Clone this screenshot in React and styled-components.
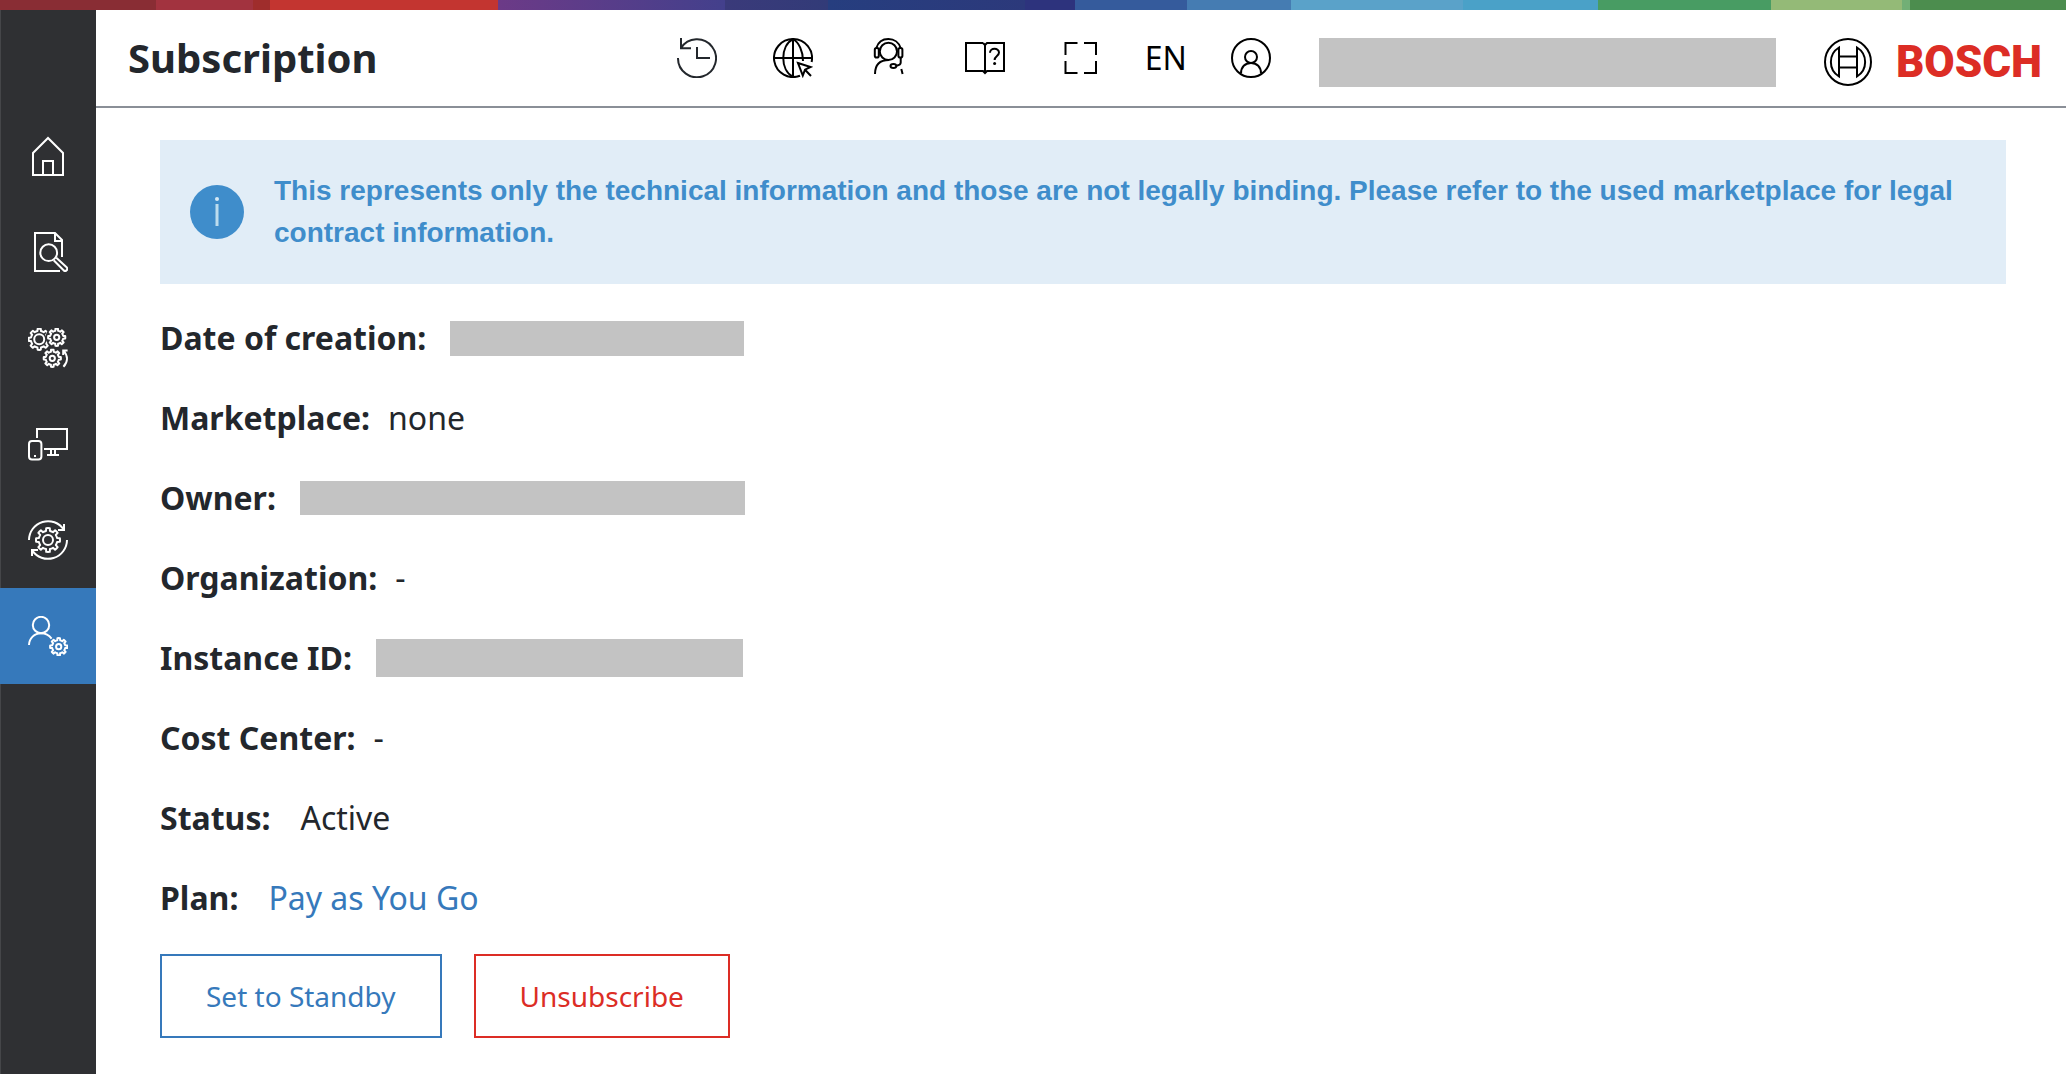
import React from "react";
import styled, { createGlobalStyle } from "styled-components";

const color = {
  ink: "#23272c",
  sidebar: "#2f3033",
  blue: "#3679bb",
  red: "#dc2d25",
  line: "#8a8f97",
  info: "#3f8dcb",
  infoBg: "#e1edf7",
  redacted: "#c3c3c3",
};

const GlobalStyle = createGlobalStyle`
  * { box-sizing: border-box; }
  body {
    margin: 0;
    background: #fff;
    color: ${color.ink};
    font-family: "Noto Sans", sans-serif;
    font-size: 32px;
    line-height: 48px;
  }
`;

const Page = styled.div`
  min-height: 100vh;
  display: flex;
  flex-direction: column;
`;

const Supergraphic = styled.div`
  height: 10px;
  display: flex;
`;

const Segment = styled.span`
  flex: ${(p) => p.$span} 1 0;
  background: ${(p) => p.$fill};
`;

const Body = styled.div`
  flex: 1;
  display: flex;
`;

const Sidebar = styled.nav`
  flex: none;
  width: 96px;
  padding-top: 98px;
  background: ${color.sidebar};
  box-shadow: inset 1px 0 #454649;
`;

const SideLink = styled.a`
  height: 96px;
  display: flex;
  align-items: center;
  justify-content: center;
  color: #fff;
  background: ${(p) => (p.$active ? color.blue : "transparent")};
`;

const Content = styled.div`
  flex: 1;
  min-width: 0;
`;

const Header = styled.header`
  height: 98px;
  padding: 0 24px 0 32px;
  display: flex;
  align-items: center;
  border-bottom: 2px solid ${color.line};
`;

const Title = styled.h1`
  margin: 0 auto 0 0;
  font-size: 40px;
  line-height: 48px;
  font-weight: 700;
`;

const Tools = styled.div`
  display: flex;
  align-items: center;
  gap: 56px;
  margin-right: 48px;
`;

const ToolButton = styled.button`
  padding: 0;
  border: 0;
  background: none;
  color: ${(p) => (p.$soft ? color.ink : "#000")};
  font: inherit;
  display: flex;
  align-items: center;
  cursor: pointer;
`;

const LanguageGroup = styled.div`
  display: flex;
  align-items: center;
  gap: 44px;
  margin-left: -12px;
`;

const HeaderEnd = styled.div`
  display: flex;
  align-items: center;
  gap: 48px;
  padding-top: 8px;
`;

const Redacted = styled.span`
  flex: none;
  width: ${(p) => p.$width}px;
  height: ${(p) => p.$height}px;
  background: ${color.redacted};
`;

const Brand = styled.a`
  display: flex;
  align-items: center;
  gap: 24px;
  color: ${color.red};
  text-decoration: none;
  font-family: Roboto, sans-serif;
  font-size: 44px;
  line-height: 48px;
  font-weight: 900;
`;

const Main = styled.main`
  padding: 32px 60px 36px 64px;
`;

const Notice = styled.section`
  display: flex;
  align-items: center;
  gap: 30px;
  padding: 30px;
  background: ${color.infoBg};
  color: ${color.info};
`;

const NoticeText = styled.p`
  margin: 0;
  font-family: "Liberation Sans", Arial, sans-serif;
  font-size: 28px;
  line-height: 42px;
  font-weight: 700;
`;

const Details = styled.dl`
  margin: 30px 0 32px;
  display: flex;
  flex-direction: column;
  gap: 32px;
`;

const gaps = { narrow: 18, medium: 24, wide: 30 };

const Row = styled.div`
  display: flex;
  align-items: center;
  gap: ${(p) => gaps[p.$gap]}px;
`;

const Term = styled.dt`
  font-weight: 700;
`;

const Value = styled.dd`
  margin: 0;
  display: flex;
`;

const PlanLink = styled.a`
  color: ${color.blue};
  text-decoration: none;
`;

const Actions = styled.div`
  display: flex;
  gap: 32px;
`;

const ActionButton = styled.button`
  height: 84px;
  padding: 0 44px;
  border: 2px solid currentColor;
  background: #fff;
  color: ${(p) => (p.$danger ? color.red : color.blue)};
  font-family: inherit;
  font-size: 28px;
  line-height: 42px;
  cursor: pointer;
`;

const Glyph = styled.svg`
  display: block;
  flex: none;
  fill: none;
  stroke: currentColor;
  stroke-width: 2;
`;

function Icon({ size = 40, children, ...rest }) {
  return (
    <Glyph width={size} height={size} viewBox={`0 0 ${size} ${size}`} aria-hidden="true" {...rest}>
      {children}
    </Glyph>
  );
}

/* Closed outline of a cog wheel with evenly spaced teeth. */
function gearPath(cx, cy, outer, inner, teeth = 8) {
  const step = (Math.PI * 2) / teeth;
  const at = (r, a) => `${(cx + r * Math.sin(a)).toFixed(2)} ${(cy - r * Math.cos(a)).toFixed(2)}`;
  let d = "";
  for (let i = 0; i < teeth; i++) {
    const a = i * step;
    d += `${i ? "L" : "M"}${at(inner, a - step * 0.27)}L${at(outer, a - step * 0.19)}`;
    d += `A${outer} ${outer} 0 0 1 ${at(outer, a + step * 0.19)}L${at(inner, a + step * 0.27)}`;
    d += `A${inner} ${inner} 0 0 1 ${at(inner, a + step * 0.73)}`;
  }
  return d + "Z";
}

const HomeIcon = () => (
  <Icon>
    <path d="M5 17 20 2 35 17V39H5ZM15 39V25H25V39" />
  </Icon>
);

const DocumentSearchIcon = () => (
  <Icon>
    <path d="M32 39H7V1H27L34 8V25M27 1V9H34" />
    <circle cx="20.7" cy="20.7" r="8.4" />
    <path d="M25.7 28.3 35.6 38.3A2 2 0 0 0 38.6 35.3L28.3 25.7" />
  </Icon>
);

const GearsIcon = () => (
  <Icon strokeLinejoin="round">
    <path d={gearPath(11.2, 11.3, 10.6, 8.4)} />
    <circle cx="11.2" cy="11.3" r="5" />
    <circle cx="28.7" cy="9.3" r="11" fill={color.sidebar} stroke="none" />
    <path d={gearPath(28.7, 9.3, 8.6, 6.6)} />
    <circle cx="28.7" cy="9.3" r="2.6" />
    <path d={gearPath(24.3, 30.3, 8.6, 6.6)} />
    <circle cx="24.3" cy="30.3" r="2.6" />
    <path d="M35.4 38.8C40 34 40.2 28 35.6 22.6M35.2 27V22.4H39.6" strokeLinejoin="miter" />
  </Icon>
);

const DevicesIcon = () => (
  <Icon>
    <path d="M9 14V5H39V25H16M23 25V31M27 25V31M19 31H31" />
    <rect x="1" y="17" width="12.4" height="18.4" rx="3" />
    <path d="M6 32H8" />
  </Icon>
);

const SyncIcon = () => (
  <Icon>
    <path d="M1 20A19 19 0 0 1 35.8 9.6M36 4V10H30M39 20A19 19 0 0 1 4.2 30.4M4 36V30H10" />
    <path d={gearPath(20, 20, 12, 9.3)} strokeLinejoin="round" />
    <circle cx="20" cy="20" r="5" />
  </Icon>
);

const UserSettingsIcon = () => (
  <Icon>
    <circle cx="13" cy="9" r="8.2" />
    <path d="M1 29A12 12 0 0 1 13 17.2C17.5 17.2 21 19 23.6 22.6" />
    <path d={gearPath(30.7, 30.7, 8.6, 6.6)} strokeLinejoin="round" />
    <circle cx="30.7" cy="30.7" r="2.6" />
  </Icon>
);

const HistoryIcon = () => (
  <Icon>
    <path d="M1 20A19 19 0 1 0 4 10M4 0V10.3H14M20 9V20H33" />
  </Icon>
);

const GlobeIcon = () => (
  <Icon>
    <path d="M27 37.7A19 19 0 1 1 38.6 24M20 1V39M1 20H39" />
    <path d="M20 1C7 8 7 32 20 39M20 1C26 4.5 30 13 30 23" />
    <path d="M25 25 37.5 29 32 31.7 29.8 37.5ZM32 31.7 38 38" />
  </Icon>
);

const SupportIcon = () => (
  <Icon>
    <circle cx="19.4" cy="13.4" r="8.6" />
    <path d="M7.3 10C9 4.5 13.5 1 19.4 1S30 4.5 31.6 10" />
    <rect x="5.8" y="10" width="4" height="9.6" rx="1.8" />
    <rect x="29.4" y="10" width="4" height="9.6" rx="1.8" />
    <path d="M31.7 20V24.5C31.7 26.5 30 27.3 27.6 27.7" />
    <ellipse cx="24.4" cy="28" rx="2.9" ry="2" />
    <path d="M6 36C6 27 11 22 20 22M32.3 31 33.6 36" />
  </Icon>
);

const ManualIcon = () => (
  <Icon>
    <path d="M18 5H1V33H18L20 35 22 33H39V5H22L20 7 18 5M20 7V35" />
    <path d="M25 14.8C25 9.5 34 9.5 34 14.6C34 18 29.6 18 29.6 22" />
    <circle cx="29.6" cy="25.5" r="1.5" fill="currentColor" stroke="none" />
  </Icon>
);

const FullscreenIcon = () => (
  <Icon>
    <path d="M16.5 5H4.5V17M23 5H35V17M16.5 35H4.5V23M23 35H35V23" />
  </Icon>
);

const AccountIcon = () => (
  <Icon>
    <circle cx="20" cy="20" r="19" />
    <circle cx="20" cy="19" r="6" />
    <path d="M10 35.5C10 29 14 25 20 25S30 29 30 35.5" />
  </Icon>
);

const InfoIcon = () => (
  <Icon size={54}>
    <circle cx="27" cy="27" r="27" fill="currentColor" stroke="none" />
    <circle cx="27" cy="14" r="2" fill="#d5e8f5" stroke="none" />
    <path d="M27 19V41" stroke="#bcdcee" strokeWidth="3" />
  </Icon>
);

const AnchorMark = () => (
  <Icon size={48} color="#000">
    <circle cx="24" cy="24" r="23" />
    <path d="M15 9.5A17 17 0 0 0 15 38.5ZM33 9.5A17 17 0 0 1 33 38.5ZM15 18.5H33M15 29.5H33" />
  </Icon>
);

const segments = [
  [156, "#892d34"],
  [97, "#a2333f"],
  [17, "#9f2d2c"],
  [228, "#c33530"],
  [227, "linear-gradient(90deg, #6c3a87, #43408c)"],
  [103, "linear-gradient(90deg, #3a3a7a, #323b78)"],
  [197, "linear-gradient(90deg, #263e7f, #2c397b)"],
  [50, "#2d337d"],
  [112, "#355b9c"],
  [104, "#457cb2"],
  [172, "#5aa2c9"],
  [135, "#4aa1c8"],
  [173, "#489c63"],
  [131, "#94ba77"],
  [8, "#72af76"],
  [156, "#4c8d4e"],
];

const navigation = [
  { label: "Home", icon: HomeIcon },
  { label: "Search", icon: DocumentSearchIcon },
  { label: "Processes", icon: GearsIcon },
  { label: "Devices", icon: DevicesIcon },
  { label: "Updates", icon: SyncIcon },
  { label: "Subscription", icon: UserSettingsIcon, active: true },
];

const tools = [
  { label: "History", icon: HistoryIcon, soft: true },
  { label: "Website", icon: GlobeIcon },
  { label: "Support", icon: SupportIcon },
  { label: "Manual", icon: ManualIcon },
  { label: "Full screen", icon: FullscreenIcon },
];

const details = [
  { term: "Date of creation:", value: <Redacted $width={294} $height={35} />, gap: "medium" },
  { term: "Marketplace:", value: "none", gap: "narrow" },
  { term: "Owner:", value: <Redacted $width={445} $height={34} />, gap: "medium" },
  { term: "Organization:", value: "-", gap: "narrow" },
  { term: "Instance ID:", value: <Redacted $width={367} $height={38} />, gap: "medium" },
  { term: "Cost Center:", value: "-", gap: "narrow" },
  { term: "Status:", value: "Active", gap: "wide" },
  { term: "Plan:", value: <PlanLink href="#plan">Pay as You Go</PlanLink>, gap: "wide" },
];

export default function App() {
  return (
    <Page>
      <GlobalStyle />
      <Supergraphic>
        {segments.map(([span, fill], i) => (
          <Segment key={i} $span={span} $fill={fill} />
        ))}
      </Supergraphic>
      <Body>
        <Sidebar aria-label="Main">
          {navigation.map(({ label, icon: Picture, active }) => (
            <SideLink key={label} href={`#${label.toLowerCase()}`} aria-label={label} $active={active}>
              <Picture />
            </SideLink>
          ))}
        </Sidebar>
        <Content>
          <Header>
            <Title>Subscription</Title>
            <Tools>
              {tools.map(({ label, icon: Picture, soft }) => (
                <ToolButton key={label} type="button" aria-label={label} $soft={soft}>
                  <Picture />
                </ToolButton>
              ))}
              <LanguageGroup>
                <ToolButton type="button">EN</ToolButton>
                <ToolButton type="button" aria-label="Account">
                  <AccountIcon />
                </ToolButton>
              </LanguageGroup>
            </Tools>
            <HeaderEnd>
              <Redacted $width={457} $height={49} />
              <Brand href="#bosch">
                <AnchorMark />
                BOSCH
              </Brand>
            </HeaderEnd>
          </Header>
          <Main>
            <Notice>
              <InfoIcon />
              <NoticeText>
                This represents only the technical information and those are not legally binding. Please refer to the
                used marketplace for legal contract information.
              </NoticeText>
            </Notice>
            <Details>
              {details.map(({ term, value, gap }) => (
                <Row key={term} $gap={gap}>
                  <Term>{term}</Term>
                  <Value>{value}</Value>
                </Row>
              ))}
            </Details>
            <Actions>
              <ActionButton type="button">Set to Standby</ActionButton>
              <ActionButton type="button" $danger>
                Unsubscribe
              </ActionButton>
            </Actions>
          </Main>
        </Content>
      </Body>
    </Page>
  );
}
